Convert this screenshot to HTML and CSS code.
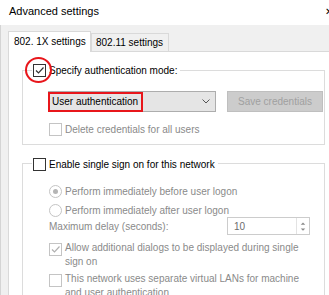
FILE: index.html
```html
<!DOCTYPE html>
<html lang="en">
<head>
    <meta charset="UTF-8">
    <title>Advanced settings</title>
    <link rel="stylesheet" href="styles.css">
</head>
<body>
    <div class="titlebar">
        <span class="title">Advanced settings</span>
        <span class="close">✕</span>
    </div>
    <div class="dialog">
        <div class="tabs">
            <div class="tab active">802. 1X settings</div>
            <div class="tab">802.11 settings</div>
        </div>
        <div class="panel">
            <div class="group first">
                <div class="group-title">
                    <span class="check checked"><svg viewBox="0 0 11 11"><path d="M2 5.5 L4.5 8 L9.5 2.5" /></svg></span>
                    <span>Specify authentication mode:</span>
                    <span class="mark-circle"></span>
                </div>
                <div class="auth-row">
                    <div class="select">
                        <span class="select-text">User authentication</span>
                        <svg class="chevron" viewBox="0 0 8 5"><path d="M0.5 0.5 L4 4 L7.5 0.5" /></svg>
                    </div>
                    <div class="button disabled">Save credentials</div>
                </div>
                <div class="row off">
                    <span class="check"></span>
                    <span>Delete credentials for all users</span>
                </div>
            </div>

            <div class="group second">
                <div class="group-title">
                    <span class="check"></span>
                    <span>Enable single sign on for this network</span>
                </div>
                <div class="row off r1">
                    <span class="radio selected"></span>
                    <span>Perform immediately before user logon</span>
                </div>
                <div class="row off r2">
                    <span class="radio"></span>
                    <span>Perform immediately after user logon</span>
                </div>
                <div class="row off delay">
                    <span class="plain">Maximum delay (seconds):</span>
                    <div class="spin">
                        <span>10</span>
                        <div class="spin-arrows">
                            <svg viewBox="0 0 7 4"><path d="M0.5 3.5 L3.5 0.5 L6.5 3.5 Z" /></svg>
                            <svg viewBox="0 0 7 4"><path d="M0.5 0.5 L3.5 3.5 L6.5 0.5 Z" /></svg>
                        </div>
                    </div>
                </div>
                <div class="row off multi r3">
                    <span class="check checked"><svg viewBox="0 0 11 11"><path d="M2 5.5 L4.5 8 L9.5 2.5" /></svg></span>
                    <span>Allow additional dialogs to be displayed during single<br>sign on</span>
                </div>
                <div class="row off multi r4">
                    <span class="check"></span>
                    <span>This network uses separate virtual LANs for machine<br>and user authentication</span>
                </div>
            </div>
        </div>
    </div>
</body>
</html>
```

FILE: styles.css
```css
body {
    margin: 0;
    padding: 0;
    width: 329px;
    height: 295px;
    overflow: hidden;
    font-family: "Liberation Sans", Arial, sans-serif;
    font-size: 10px;
    color: #000;
    background-color: #f0f0f0;
}
.titlebar {
    height: 25px;
    background-color: #ffffff;
    display: flex;
    align-items: center;
    justify-content: space-between;
    padding-left: 9px;
    box-sizing: border-box;
}
.title {
    font-size: 11px;
    margin-top: -3px;
}
.close {
    font-size: 10px;
    margin-right: -4px;
    margin-top: -3px;
}
.dialog {
    padding-left: 7px;
    border-left: 1px solid #d4d4d4;
    height: 270px;
    box-sizing: border-box;
}
.tabs {
    display: flex;
    align-items: flex-end;
    height: 26px;
}
.tab {
    border: 1px solid #d9d9d9;
    border-bottom: none;
    background-color: #f0f0f0;
    height: 17px;
    line-height: 17px;
    padding: 0 4px;
    width: 68px;
}
.tab.active {
    background-color: #ffffff;
    height: 20px;
    line-height: 20px;
    width: 72px;
    margin-bottom: -1px;
    position: relative;
    z-index: 1;
    padding-left: 5px;
}
.panel {
    background-color: #ffffff;
    border: 1px solid #d9d9d9;
    width: 340px;
    height: 260px;
    padding: 0 0 0 13px;
}
.group {
    width: 301px;
    border: 1px solid #dcdcdc;
}
.group.first {
    margin-top: 18px;
    height: 73px;
}
.group.second {
    margin-top: 18px;
    height: 200px;
}
.group-title {
    display: inline-flex;
    align-items: center;
    gap: 3px;
    height: 14px;
    background-color: #ffffff;
    margin-top: -8px;
    margin-left: 9px;
    padding: 0 3px 0 1px;
    position: relative;
    vertical-align: top;
}
.group.second .group-title {
    margin-top: -7px;
}
.mark-circle {
    position: absolute;
    left: -7px;
    top: -6px;
    width: 23px;
    height: 22px;
    border: 2px solid #e8161b;
    border-radius: 50%;
}
.check {
    width: 11px;
    height: 11px;
    border: 1px solid #333333;
    background-color: #ffffff;
    display: inline-flex;
    flex-shrink: 0;
}
.check svg {
    width: 11px;
    height: 11px;
}
.check path {
    fill: none;
    stroke: #333333;
    stroke-width: 1.2;
}
.off {
    color: #8a8a8a;
}
.off .check {
    border-color: #c4c4c4;
}
.off .check path {
    stroke: #b0b0b0;
}
.radio {
    width: 11px;
    height: 11px;
    border: 1px solid #c4c4c4;
    border-radius: 50%;
    flex-shrink: 0;
    position: relative;
    box-sizing: content-box;
}
.radio.selected::after {
    content: "";
    position: absolute;
    left: 3px;
    top: 3px;
    width: 5px;
    height: 5px;
    border-radius: 50%;
    background-color: #b5b5b5;
}
.auth-row {
    display: flex;
    margin-top: 9px;
    padding-left: 25px;
}
.select {
    width: 166px;
    height: 19px;
    border: 1px solid #adadad;
    background-color: #e5e5e5;
    display: flex;
    align-items: center;
    justify-content: space-between;
}
.select-text {
    border: 2px solid #e8161b;
    height: 16px;
    line-height: 16px;
    padding: 0 2px;
    margin-left: -1px;
    width: 87px;
}
.chevron {
    width: 8px;
    height: 5px;
    margin-right: 5px;
}
.chevron path {
    fill: none;
    stroke: #555555;
    stroke-width: 1;
}
.button {
    margin-left: 11px;
    width: 94px;
    height: 19px;
    line-height: 19px;
    text-align: center;
    border: 1px solid #bfbfbf;
    background-color: #cccccc;
    color: #a0a0a0;
}
.row {
    display: flex;
    align-items: center;
    gap: 3px;
    padding-left: 26px;
    height: 14px;
}
.group.first .row {
    margin-top: 10px;
}
.r1 {
    margin-top: 9px;
}
.r2 {
    margin-top: 5px;
}
.delay {
    height: 18px;
    padding-right: 14px;
}
.delay .spin {
    margin-left: auto;
}
.spin {
    width: 75px;
    height: 16px;
    border: 1px solid #cccccc;
    display: flex;
    align-items: center;
    justify-content: space-between;
    padding-left: 6px;
    color: #6d6d6d;
}
.spin-arrows {
    display: flex;
    flex-direction: column;
    justify-content: center;
    align-items: center;
    gap: 3px;
    width: 12px;
    height: 16px;
    border-left: 1px solid #e3e3e3;
}
.spin-arrows svg {
    width: 6px;
    height: 3px;
}
.spin-arrows path {
    fill: #8a8a8a;
}
.multi {
    height: 28px;
    align-items: flex-start;
    line-height: 14px;
}
.multi .check {
    margin-top: 2px;
}
.r3 {
    margin-top: 6px;
}
.r4 {
    margin-top: 3px;
}
```
